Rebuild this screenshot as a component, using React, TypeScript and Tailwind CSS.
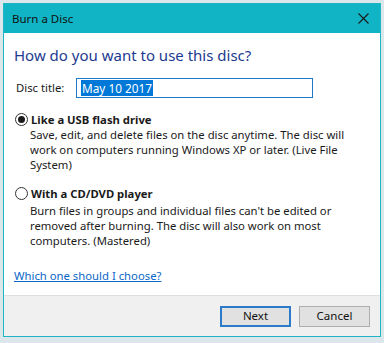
import React from "react";

function Radio({ checked }: { checked: boolean }) {
  return (
    <span className="flex h-[13px] w-[13px] shrink-0 items-center justify-center rounded-full border border-[#333333] bg-white">
      {checked && <span className="h-[7px] w-[7px] rounded-full bg-[#1a1a1a]" />}
    </span>
  );
}

export default function App() {
  return (
    <div className="h-[343px] w-[384px] bg-[#dce7ec] pl-[3px] pt-[3px] font-['Segoe_UI','Noto_Sans',sans-serif] text-[11.3px] text-[#1a1a1a]">
      <div className="flex h-[334px] w-[378px] flex-col border border-[#1fb6c4] bg-white">
        <div className="flex h-[29px] shrink-0 items-center justify-between bg-[#10b4c4] pl-[8px] pr-[10px]">
          <span className="text-[11.5px] text-[#111]">Burn a Disc</span>
          <svg width="11" height="11" viewBox="0 0 11 11" className="mr-[1px]">
            <path d="M0.5 0.5 L10.5 10.5 M10.5 0.5 L0.5 10.5" stroke="#1a1a1a" strokeWidth="1.1" fill="none" />
          </svg>
        </div>
        <div className="flex flex-1 flex-col pl-[10px] pt-[12px]">
          <div className="text-[15px] leading-[20px] text-[#1d3a8f]">How do you want to use this disc?</div>
          <div className="mt-[13px] flex items-center">
            <span className="w-[62px] pl-[2px]">Disc title:</span>
            <div className="flex h-[20px] w-[237px] items-center border border-[#1f78c8] pl-[4px]">
              <span className="bg-[#0078d7] px-[1px] text-[11.8px] leading-[16px] text-white">May 10 2017</span>
            </div>
          </div>
          <div className="mt-[14px] flex items-center gap-[3px] pl-[1px]">
            <Radio checked />
            <span className="font-bold leading-[15px]">Like a USB flash drive</span>
          </div>
          <div className="pl-[16px] leading-[15px]">
            <div>Save, edit, and delete files on the disc anytime. The disc will</div>
            <div>work on computers running Windows XP or later. (Live File</div>
            <div>System)</div>
          </div>
          <div className="mt-[14px] flex items-center gap-[3px] pl-[1px]">
            <Radio checked={false} />
            <span className="font-bold leading-[15px]">With a CD/DVD player</span>
          </div>
          <div className="mt-[2px] pl-[16px] leading-[15px]">
            <div>Burn files in groups and individual files can't be edited or</div>
            <div>removed after burning. The disc will also work on most</div>
            <div>computers. (Mastered)</div>
          </div>
          <div className="mt-[20px] leading-[15px]">
            <span className="text-[#0a66c8] underline">Which one should I choose?</span>
          </div>
        </div>
        <div className="flex h-[41px] shrink-0 items-center justify-end gap-[8px] border-t border-[#dfdfdf] bg-[#f0f0f0] pr-[10px]">
          <button className="flex h-[21px] w-[71px] items-center justify-center border-2 border-[#2a7cc9] bg-[#e1e1e1] text-[11.5px] text-[#111]">
            Next
          </button>
          <button className="flex h-[21px] w-[71px] items-center justify-center border border-[#adadad] bg-[#e1e1e1] text-[11.5px] text-[#111]">
            Cancel
          </button>
        </div>
      </div>
    </div>
  );
}
